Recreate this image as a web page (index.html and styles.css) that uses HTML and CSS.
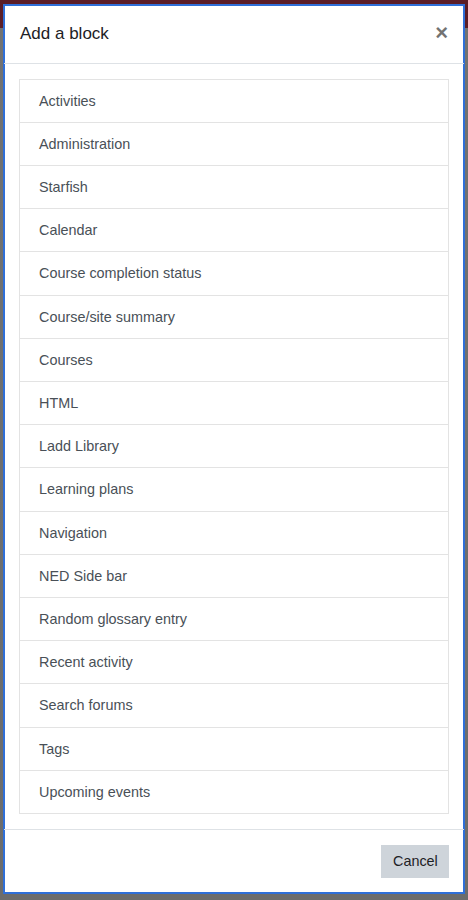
FILE: index.html
```html
<!DOCTYPE html>
<html>
<head>
<meta charset="utf-8">
<link rel="stylesheet" href="styles.css">
</head>
<body>
<div class="backdrop">
  <div class="modal">
    <div class="modal-header">
      <h5 class="modal-title">Add a block</h5>
      <span class="close">×</span>
    </div>
    <div class="modal-body">
      <div class="list-group">
        <div class="item">Activities</div>
        <div class="item">Administration</div>
        <div class="item">Starfish</div>
        <div class="item">Calendar</div>
        <div class="item">Course completion status</div>
        <div class="item">Course/site summary</div>
        <div class="item">Courses</div>
        <div class="item">HTML</div>
        <div class="item">Ladd Library</div>
        <div class="item">Learning plans</div>
        <div class="item">Navigation</div>
        <div class="item">NED Side bar</div>
        <div class="item">Random glossary entry</div>
        <div class="item">Recent activity</div>
        <div class="item">Search forums</div>
        <div class="item">Tags</div>
        <div class="item">Upcoming events</div>
      </div>
    </div>
    <div class="modal-footer">
      <button class="btn">Cancel</button>
    </div>
  </div>
</div>
</body>
</html>
```
FILE: styles.css
```css
html, body {
  margin: 0;
  padding: 0;
}
body {
  font-family: "Liberation Sans", Arial, sans-serif;
  background: #6e6e6e;
}
.backdrop {
  height: 900px;
  box-sizing: border-box;
  padding: 4px 3px 6px 3px;
  background: linear-gradient(#5b1d27 0, #5b1d27 28px, #727272 28px, #6c6c6c 100%);
}
.modal {
  height: 890px;
  box-sizing: border-box;
  background: #fff;
  border: 1px solid #2f6fd8;
  box-shadow: inset 0 0 0 1px #2f6fd8, inset 0 0 0 2px #ffffff;
  display: flex;
  flex-direction: column;
}
.modal-header {
  display: flex;
  align-items: center;
  justify-content: space-between;
  padding: 16px 16px 15px 16px;
  border-bottom: 1px solid #dee2e6;
  height: 27px;
}
.modal-title {
  margin: 0;
  font-size: 17px;
  font-weight: 400;
  color: #1d2125;
  line-height: 26px;
}
.close {
  font-size: 22px;
  font-weight: 700;
  color: #000;
  opacity: 0.55;
  line-height: 22px;
  margin-top: -2px;
}
.modal-body {
  padding: 15px;
  flex: 1;
}
.list-group {
  border: 1px solid #e3e3e3;
}
.item {
  padding: 10px 19px;
  line-height: 22.2px;
  font-size: 14.4px;
  color: #495057;
  border-top: 1px solid #e3e3e3;
}
.item:first-child {
  border-top: none;
}
.modal-footer {
  border-top: 1px solid #dee2e6;
  padding: 15px;
  display: flex;
  justify-content: flex-end;
}
.btn {
  font-family: "Liberation Sans", Arial, sans-serif;
  background: #ced4da;
  border: none;
  border-radius: 0;
  color: #1d2125;
  font-size: 14.4px;
  line-height: 21px;
  padding: 6px 12px;
  height: 33px;
  width: 68px;
}
```
